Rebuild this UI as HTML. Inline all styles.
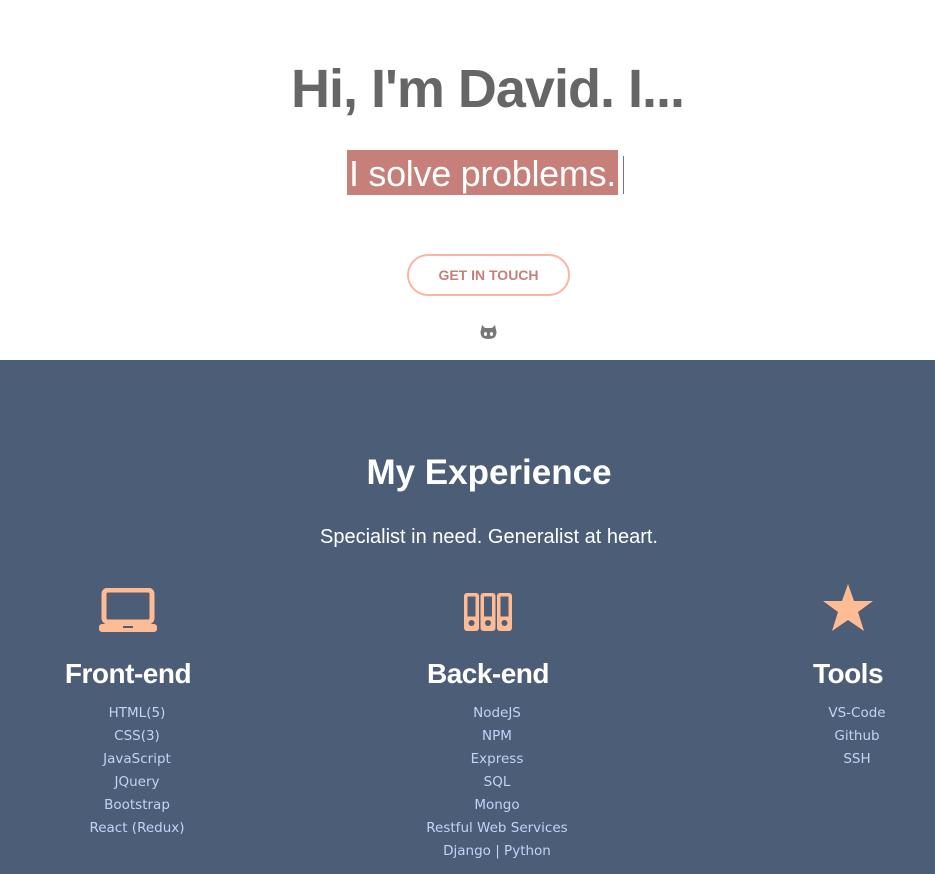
<!DOCTYPE html>
<html><head><meta charset="utf-8"><style>
*{margin:0;padding:0;box-sizing:border-box}
body{width:935px;height:874px;overflow:hidden;background:#fff;font-family:"Liberation Sans",sans-serif}
.top{height:360px;position:relative}
h1{position:absolute;top:58px;left:0;width:975px;text-align:center;font-size:54px;color:#666;font-weight:bold;letter-spacing:-1px}
.sub{position:absolute;top:150px;left:347px;width:271px;height:45px;background:#c67f79;color:#fff;font-size:36px;font-weight:300;line-height:47px;text-align:center;letter-spacing:-0.3px}
.cur{position:absolute;left:623px;top:156px;width:1px;height:38px;background:#6a70b0}
.btn{position:absolute;left:407px;top:254px;width:163px;height:42px;border:2px solid #fbb5a3;border-radius:21px;color:#c67f79;font-weight:bold;font-size:14px;text-align:center;line-height:38px}
.gh{position:absolute;left:480px;top:325px}
.blue{position:absolute;top:360px;left:0;width:935px;height:514px;background:#4b5d77;color:#fff}
h2{position:absolute;top:453px;width:978px;text-align:center;font-size:35px;font-weight:bold}
.tag{position:absolute;top:526px;width:978px;text-align:center;font-size:20px}
.col{position:absolute;top:580px;width:240px;text-align:center}
.col h3{font-size:28px;font-weight:bold;height:42px;line-height:28px;letter-spacing:-0.5px}
.col ul{list-style:none;padding-left:18px;color:#c4d2f5;font-family:"DejaVu Sans",sans-serif;font-size:13.5px;line-height:23px}
.ic{display:flex;justify-content:center;align-items:flex-end;height:52px}
</style></head><body>
<div class="top">
<h1>Hi, I'm David. I...</h1>
<div class="sub">I solve problems.</div><div class="cur"></div>
<div class="btn">GET IN TOUCH</div>
<svg class="gh" width="17" height="15" viewBox="0 0 17 15"><path d="M2 0 L5 3 H12 L15 0 L16 5 Q17 7 16 10 Q15 14 8.5 14 Q2 14 1 10 Q0 7 1 5 Z" fill="#777"/><ellipse cx="5.5" cy="9" rx="1.5" ry="2" fill="#fff"/><ellipse cx="11.5" cy="9" rx="1.5" ry="2" fill="#fff"/></svg>
</div>
<div class="blue"></div>
<h2 style="color:#fff">My Experience</h2>
<div class="tag" style="color:#fff">Specialist in need. Generalist at heart.</div>
<div class="col" style="left:8px;color:#fff"><div class="ic"><svg width="58" height="44" viewBox="0 0 58 44"><rect x="5" y="2" width="48" height="32" rx="4" fill="none" stroke="#ffbc92" stroke-width="5"/><rect x="0" y="36" width="58" height="8" rx="3" fill="#ffbc92"/><rect x="24" y="38" width="10" height="2" fill="#4b5d77"/></svg></div>
<h3 style="margin-top:28px">Front-end</h3><ul><li>HTML(5)</li><li>CSS(3)</li><li>JavaScript</li><li>JQuery</li><li>Bootstrap</li><li>React (Redux)</li></ul></div>
<div class="col" style="left:368px;color:#fff"><div class="ic"><svg width="50" height="40" viewBox="0 0 50 40"><g fill="#ffbc92"><rect x="1" y="1" width="15" height="38" rx="3"/><rect x="17.5" y="1" width="15" height="38" rx="3"/><rect x="34" y="1" width="15" height="38" rx="3"/></g><g fill="#4b5d77"><rect x="4.5" y="4.5" width="8" height="20"/><rect x="21" y="4.5" width="8" height="20"/><rect x="37.5" y="4.5" width="8" height="20"/><circle cx="8.5" cy="31" r="3"/><circle cx="25" cy="31" r="3"/><circle cx="41.5" cy="31" r="3"/></g></svg></div>
<h3 style="margin-top:28px">Back-end</h3><ul><li>NodeJS</li><li>NPM</li><li>Express</li><li>SQL</li><li>Mongo</li><li>Restful Web Services</li><li>Django | Python</li></ul></div>
<div class="col" style="left:728px;color:#fff"><div class="ic"><svg width="52" height="48" viewBox="0 0 52 48"><path d="M26 0 L32 17 L51 17 L36 28 L42 47 L26 36 L10 47 L16 28 L1 17 L20 17 Z" fill="#ffbc92"/></svg></div>
<h3 style="margin-top:28px">Tools</h3><ul><li>VS-Code</li><li>Github</li><li>SSH</li></ul></div>
</body></html>
